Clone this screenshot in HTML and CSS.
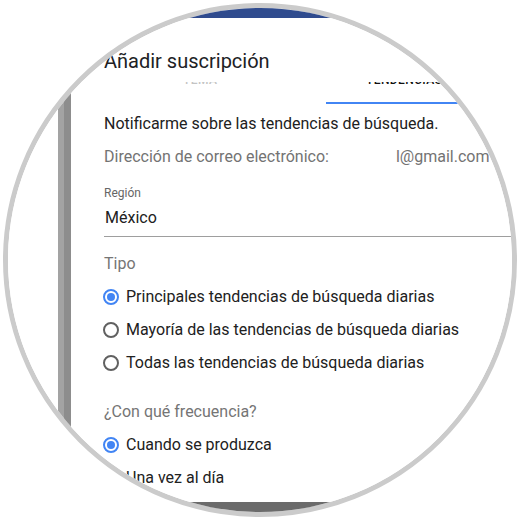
FILE: index.html
```html
<!DOCTYPE html>
<html lang="es">
<head>
  <meta charset="UTF-8" />
  <meta name="viewport" content="width=device-width, initial-scale=1" />
  <title>Añadir suscripción</title>
  <link rel="stylesheet" href="styles.css">
</head>
<body>
  <div class="lens">
    <div class="topbar"></div>
    <div class="stage">
      <div class="backdrop"></div>
      <div class="edge"></div>
      <div class="dialog">
        <h1 class="title">Añadir suscripción</h1>

        <div class="tabs">
          <div class="tab tab-first"><div class="tab-clip"><span>Tema</span></div></div>
          <div class="tab tab-active"><div class="tab-clip"><span>Tendencias</span></div></div>
        </div>

        <p class="intro">Notificarme sobre las tendencias de búsqueda.</p>
        <p class="email">Dirección de correo electrónico: <span class="redacted"></span>l@gmail.com</p>

        <div class="field">
          <label class="field-label">Región</label>
          <div class="field-value">México</div>
        </div>

        <div class="group-title">Tipo</div>
        <div class="radio checked"><span class="dot"></span>Principales tendencias de búsqueda diarias</div>
        <div class="radio"><span class="dot"></span>Mayoría de las tendencias de búsqueda diarias</div>
        <div class="radio"><span class="dot"></span>Todas las tendencias de búsqueda diarias</div>

        <div class="group-title group-gap">¿Con qué frecuencia?</div>
        <div class="radio checked"><span class="dot"></span>Cuando se produzca</div>
        <div class="radio"><span class="dot"></span>Una vez al día</div>
      </div>
    </div>
    <div class="bottombar"></div>
  </div>
</body>
</html>
```

FILE: styles.css
```css
body {
  margin: 0;
  background: #fff;
  font-family: Roboto, "Noto Sans", sans-serif;
  color: #212121;
}
.lens {
  width: 504px;
  height: 504px;
  margin: 3px;
  border: 5px solid #cbcbcb;
  border-radius: 50%;
  overflow: hidden;
  display: flex;
  flex-direction: column;
}
.topbar {
  height: 10px;
  flex: none;
  background: #2f4b8e;
}
.bottombar {
  height: 10px;
  flex: none;
  background: #6b6b6b;
}
.stage {
  flex: 1;
  min-height: 0;
  display: flex;
}
.backdrop {
  width: 50px;
  background: #fff;
}
.edge {
  width: 13px;
  background: linear-gradient(to right, #a3a3a3 6px, #8d8d8d 6px);
}
.dialog {
  flex: 1;
  padding: 31px 0 0 33px;
  overflow: hidden;
  background: #fff;
}
.title {
  margin: 0;
  font-size: 20px;
  line-height: 24px;
  font-weight: 400;
  color: #202124;
}

/* tabs, mostly hidden behind the header */
.tabs {
  display: flex;
}
.tab {
  padding-top: 9px;
  height: 20px;
  border-bottom: 2px solid transparent;
}
.tab-first {
  width: 143px;
  padding-left: 79px;
  color: #c4c4c4;
}
.tab-active {
  width: 92px;
  padding-left: 40px;
  color: #111;
  border-bottom-color: #4285f4;
}
.tab-clip {
  height: 4px;
  overflow: hidden;
}
.tab-clip span {
  display: block;
  margin-top: -9px;
  font-size: 12px;
  line-height: 14px;
  font-weight: 500;
  text-transform: uppercase;
  letter-spacing: 0.4px;
}

.intro {
  margin: 10px 0 0;
  font-size: 16px;
  line-height: 20px;
}
.email {
  margin: 13px 0 0;
  font-size: 16px;
  line-height: 20px;
  color: #737373;
}
.redacted {
  display: inline-block;
  width: 63px;
}
.field {
  margin-top: 18px;
  padding-bottom: 8px;
  border-bottom: 1px solid #9e9e9e;
}
.field-label {
  display: block;
  font-size: 12px;
  line-height: 16px;
  color: #666;
}
.field-value {
  margin-top: 7px;
  padding-left: 1px;
  font-size: 16px;
  line-height: 20px;
}
.group-title {
  margin: 17px 0 6px;
  font-size: 16px;
  line-height: 20px;
  color: #757575;
}
.group-gap {
  margin-top: 23px;
}
.radio {
  display: flex;
  align-items: center;
  gap: 7px;
  height: 33px;
  font-size: 16px;
  line-height: 33px;
}
.dot {
  width: 12px;
  height: 12px;
  margin-left: -1px;
  border: 2px solid #616161;
  border-radius: 50%;
  position: relative;
}
.radio.checked .dot {
  border-color: #4285f4;
}
.radio.checked .dot::after {
  content: "";
  position: absolute;
  left: 2px;
  top: 2px;
  width: 8px;
  height: 8px;
  border-radius: 50%;
  background: #4285f4;
}
```
